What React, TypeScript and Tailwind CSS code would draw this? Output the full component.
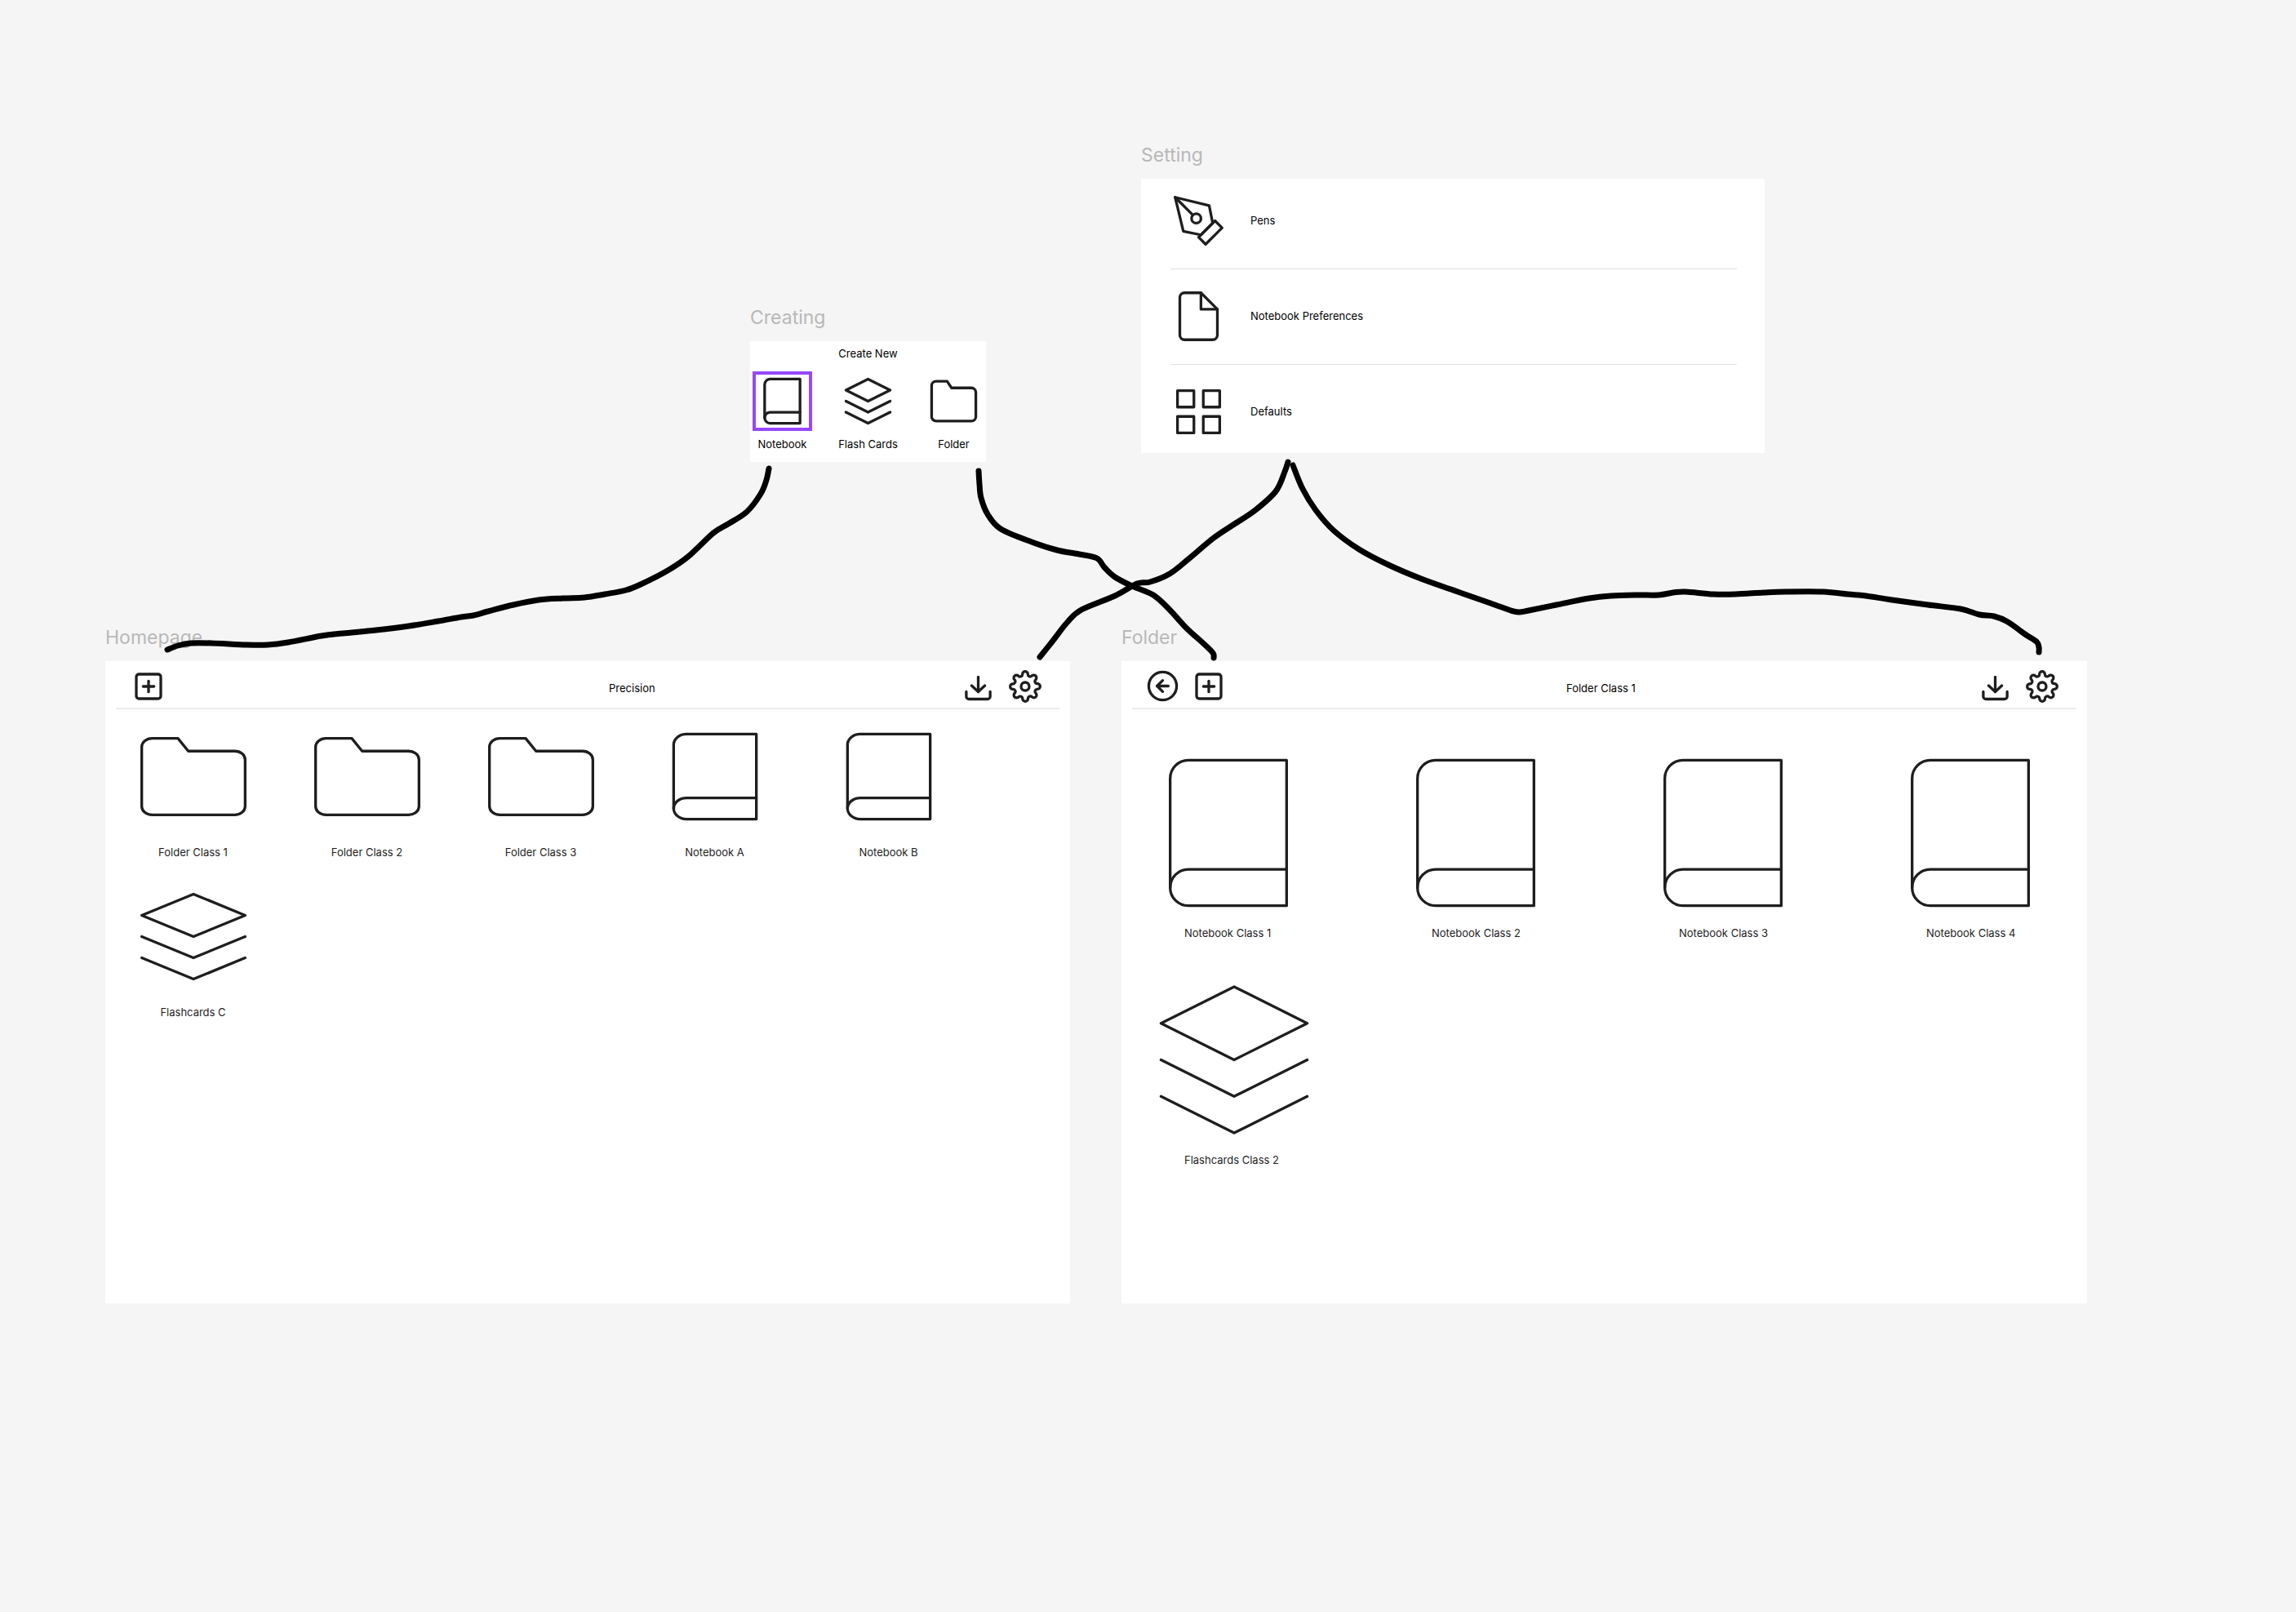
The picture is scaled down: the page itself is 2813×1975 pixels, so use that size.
import type { ReactNode } from "react";
import clsx from "clsx";

type GlyphName =
  | "book"
  | "folder"
  | "layers"
  | "pen"
  | "file"
  | "grid"
  | "plus"
  | "back"
  | "download"
  | "gear";

const glyphs: Record<GlyphName, string[]> = {
  book: [
    "M4 19.5A2.5 2.5 0 0 1 6.5 17H20",
    "M6.5 2H20v20H6.5A2.5 2.5 0 0 1 4 19.5v-15A2.5 2.5 0 0 1 6.5 2z",
  ],
  folder: [
    "M22 19a2 2 0 0 1-2 2H4a2 2 0 0 1-2-2V5a2 2 0 0 1 2-2h5l2 3h9a2 2 0 0 1 2 2z",
  ],
  layers: ["M12 2 2 7l10 5 10-5-10-5z", "M2 17l10 5 10-5", "M2 12l10 5 10-5"],
  pen: [
    "M12 19l7-7 3 3-7 7-3-3z",
    "M18 13l-1.5-7.5L2 2l3.5 14.5L13 18l5-5z",
    "M2 2l7.586 7.586",
    "M13 11a2 2 0 1 1-4 0 2 2 0 0 1 4 0z",
  ],
  file: ["M13 2H6a2 2 0 0 0-2 2v16a2 2 0 0 0 2 2h12a2 2 0 0 0 2-2V9z", "M13 2v7h7"],
  grid: ["M3 3h7v7H3z", "M14 3h7v7h-7z", "M14 14h7v7h-7z", "M3 14h7v7H3z"],
  plus: [
    "M5 3h14a2 2 0 0 1 2 2v14a2 2 0 0 1-2 2H5a2 2 0 0 1-2-2V5a2 2 0 0 1 2-2z",
    "M12 8v8",
    "M8 12h8",
  ],
  back: ["M22 12a10 10 0 1 1-20 0 10 10 0 0 1 20 0z", "M12 8l-4 4 4 4", "M16 12H8"],
  download: ["M21 15v4a2 2 0 0 1-2 2H5a2 2 0 0 1-2-2v-4", "M7 10l5 5 5-5", "M12 15V3"],
  gear: [
    "M15 12a3 3 0 1 1-6 0 3 3 0 0 1 6 0z",
    "M19.4 15a1.65 1.65 0 0 0 .33 1.82l.06.06a2 2 0 0 1 0 2.83 2 2 0 0 1-2.83 0l-.06-.06a1.65 1.65 0 0 0-1.82-.33 1.65 1.65 0 0 0-1 1.51V21a2 2 0 0 1-2 2 2 2 0 0 1-2-2v-.09A1.65 1.65 0 0 0 9 19.4a1.65 1.65 0 0 0-1.82.33l-.06.06a2 2 0 0 1-2.83 0 2 2 0 0 1 0-2.83l.06-.06a1.65 1.65 0 0 0 .33-1.82 1.65 1.65 0 0 0-1.51-1H3a2 2 0 0 1-2-2 2 2 0 0 1 2-2h.09A1.65 1.65 0 0 0 4.6 9a1.65 1.65 0 0 0-.33-1.82l-.06-.06a2 2 0 0 1 0-2.83 2 2 0 0 1 2.83 0l.06.06a1.65 1.65 0 0 0 1.82.33H9a1.65 1.65 0 0 0 1-1.51V3a2 2 0 0 1 2-2 2 2 0 0 1 2 2v.09a1.65 1.65 0 0 0 1 1.51 1.65 1.65 0 0 0 1.82-.33l.06-.06a2 2 0 0 1 2.83 0 2 2 0 0 1 0 2.83l-.06.06a1.65 1.65 0 0 0-.33 1.82V9a1.65 1.65 0 0 0 1.51 1H21a2 2 0 0 1 2 2 2 2 0 0 1-2 2h-.09a1.65 1.65 0 0 0-1.51 1z",
  ],
};

function Glyph({
  name,
  className,
  stretch = false,
}: {
  name: GlyphName;
  className: string;
  stretch?: boolean;
}) {
  return (
    <svg
      aria-hidden="true"
      viewBox="0 0 24 24"
      preserveAspectRatio={stretch ? "none" : "xMidYMid meet"}
      fill="none"
      stroke="#1e1e1e"
      strokeWidth="3.3"
      strokeLinecap="round"
      strokeLinejoin="round"
      className={clsx("block shrink-0 overflow-visible", className)}
    >
      {glyphs[name].map((d) => (
        <path key={d} d={d} vectorEffect="non-scaling-stroke" />
      ))}
    </svg>
  );
}

/* A labelled frame placed on the canvas. */
function Frame({
  title,
  place,
  className,
  children,
}: {
  title: string;
  place: string;
  className: string;
  children: ReactNode;
}) {
  return (
    <section aria-label={title} className={clsx("absolute", place)}>
      <h2 className="mb-[13px] text-[23px] leading-8 text-[#b8b8b8]">{title}</h2>
      <div className={clsx("bg-white", className)}>{children}</div>
    </section>
  );
}

function CreatingFrame() {
  const kinds: { label: string; icon: GlyphName; selected?: boolean }[] = [
    { label: "Notebook", icon: "book", selected: true },
    { label: "Flash Cards", icon: "layers" },
    { label: "Folder", icon: "folder" },
  ];
  return (
    <Frame title="Creating" place="left-[919px] top-[373px]" className="w-[289px] pt-[7px] pb-3.5">
      <h3 className="text-center leading-4">Create New</h3>
      <div className="mt-3.5 flex justify-center gap-8">
        {kinds.map((k) => (
          <button
            key={k.label}
            type="button"
            aria-pressed={!!k.selected}
            className="flex w-[73px] flex-col items-center gap-2 leading-4 whitespace-nowrap"
          >
            <span
              className={clsx(
                "flex size-[73px] items-center justify-center border-4",
                k.selected ? "border-[#9747ff]" : "border-transparent",
              )}
            >
              <Glyph name={k.icon} className="size-[65px]" />
            </span>
            {k.label}
          </button>
        ))}
      </div>
    </Frame>
  );
}

function SettingFrame() {
  const rows: { label: string; icon: GlyphName }[] = [
    { label: "Pens", icon: "pen" },
    { label: "Notebook Preferences", icon: "file" },
    { label: "Defaults", icon: "grid" },
  ];
  return (
    <Frame title="Setting" place="left-[1398px] top-[174px]" className="w-[764px] pt-[17px] pr-[34px] pb-4 pl-9">
      <ul className="divide-y divide-[#e0e0e0]">
        {rows.map((r) => (
          <li key={r.label} className="pt-[23px] pb-6 first:pt-0 last:pb-0">
            <button type="button" className="flex w-full items-center gap-[29px] text-left">
              <Glyph name={r.icon} className="size-[69px]" />
              {r.label}
            </button>
          </li>
        ))}
      </ul>
    </Frame>
  );
}

function IconButton({ label, icon, className }: { label: string; icon: GlyphName; className: string }) {
  return (
    <button type="button" aria-label={label}>
      <Glyph name={icon} stretch className={className} />
    </button>
  );
}

function TopBar({ title, columns, children }: { title: string; columns: string; children: ReactNode }) {
  return (
    <header
      className={clsx("mx-[13px] grid h-[59px] items-end border-b-2 border-[#ececec] pr-[22px] pb-1.5", columns)}
    >
      <div className="flex items-end gap-4">{children}</div>
      <h3 className="leading-9">{title}</h3>
      <div className="flex items-end gap-[18px]">
        <IconButton label="Download" icon="download" className="h-9 w-[39px]" />
        <IconButton label="Settings" icon="gear" className="size-10" />
      </div>
    </header>
  );
}

function HomepageFrame() {
  const items: { label: string; icon: GlyphName }[] = [
    { label: "Folder Class 1", icon: "folder" },
    { label: "Folder Class 2", icon: "folder" },
    { label: "Folder Class 3", icon: "folder" },
    { label: "Notebook A", icon: "book" },
    { label: "Notebook B", icon: "book" },
    { label: "Flashcards C", icon: "layers" },
  ];
  return (
    <Frame title="Homepage" place="left-[129px] top-[765px]" className="min-h-[787px] w-[1182px]">
      <TopBar title="Precision" columns="grid-cols-[584px_1fr_auto] pl-5">
        <IconButton label="Create new" icon="plus" className="size-10" />
      </TopBar>
      <div className="mt-5 flex flex-wrap gap-y-[33px] pl-px text-[#1e1e1e]">
        {items.map((item) => (
          <button
            key={item.label}
            type="button"
            className="flex w-[213px] flex-col items-center gap-[22px] leading-4"
          >
            <Glyph name={item.icon} stretch className="h-[125px] w-[152px]" />
            {item.label}
          </button>
        ))}
      </div>
    </Frame>
  );
}

function FolderFrame() {
  const items: { label: string; icon: GlyphName; size: string }[] = [
    { label: "Notebook Class 1", icon: "book", size: "w-[214px]" },
    { label: "Notebook Class 2", icon: "book", size: "w-[214px]" },
    { label: "Notebook Class 3", icon: "book", size: "w-[214px]" },
    { label: "Notebook Class 4", icon: "book", size: "w-[214px]" },
    { label: "Flashcards Class 2", icon: "layers", size: "w-[228px]" },
  ];
  return (
    <Frame title="Folder" place="left-[1374px] top-[765px]" className="min-h-[787px] w-[1183px]">
      <TopBar title="Folder Class 1" columns="grid-cols-[515px_1fr_auto] pl-[17px]">
        <IconButton label="Back" icon="back" className="size-[41px]" />
        <IconButton label="Create new" icon="plus" className="size-10" />
      </TopBar>
      <div className="mt-11 flex flex-wrap gap-x-[89px] gap-y-10 pl-6 text-[#1e1e1e]">
        {items.map((item) => (
          <button
            key={item.label}
            type="button"
            className="flex flex-col items-start gap-[7px] leading-4"
          >
            <Glyph name={item.icon} className={clsx("h-[215px]", item.size)} />
            <span className="pl-[53px]">{item.label}</span>
          </button>
        ))}
      </div>
    </Frame>
  );
}

type Point = [number, number];

/* Freehand pen strokes that link the frames. */
const strokes: Point[][] = [
  [
    [205, 796], [218, 791], [234, 788], [259, 788], [302, 790], [328, 790], [353, 787], [394, 779],
    [420, 776], [461, 772], [501, 767], [537, 761], [565, 756], [580, 754], [598, 749], [629, 741],
    [660, 735], [690, 733], [716, 732], [741, 728], [767, 723], [787, 715], [818, 699], [843, 682],
    [874, 653], [892, 642], [915, 627], [932, 605], [939, 588], [942, 574],
  ],
  [
    [1199, 577], [1200, 593], [1202, 610], [1210, 630], [1226, 648], [1264, 664], [1295, 674],
    [1322, 679], [1344, 684], [1353, 695], [1366, 707], [1387, 718], [1413, 729], [1433, 747],
    [1453, 769], [1474, 788], [1486, 800], [1487, 806],
  ],
  [
    [1274, 805], [1290, 785], [1308, 762], [1325, 747], [1366, 730], [1393, 715], [1409, 713],
    [1433, 703], [1456, 685], [1487, 659], [1514, 641], [1538, 625], [1563, 602], [1574, 578],
    [1578, 566],
  ],
  [
    [1584, 570], [1596, 599], [1612, 625], [1634, 650], [1665, 673], [1701, 692], [1741, 709],
    [1786, 725], [1826, 739], [1851, 748], [1861, 750], [1873, 748], [1907, 741], [1947, 733],
    [1974, 730], [2005, 729], [2032, 729], [2050, 726], [2065, 725], [2099, 728], [2126, 728],
    [2161, 726], [2188, 725], [2233, 725], [2264, 728], [2286, 730], [2318, 735], [2362, 741],
    [2402, 746], [2425, 753], [2443, 755], [2460, 762], [2481, 777], [2495, 786], [2498, 793],
    [2498, 799],
  ],
];

function smoothPath(p: Point[]) {
  let d = `M${p[0][0]} ${p[0][1]}`;
  for (let i = 0; i < p.length - 1; i++) {
    const a = p[i - 1] ?? p[i];
    const b = p[i];
    const c = p[i + 1];
    const e = p[i + 2] ?? c;
    d += `C${b[0] + (c[0] - a[0]) / 6} ${b[1] + (c[1] - a[1]) / 6} ${c[0] - (e[0] - b[0]) / 6} ${
      c[1] - (e[1] - b[1]) / 6
    } ${c[0]} ${c[1]}`;
  }
  return d;
}

function Connectors() {
  return (
    <svg
      aria-hidden="true"
      className="pointer-events-none absolute top-0 left-0 size-full"
      fill="none"
      stroke="#000"
      strokeWidth="7"
      strokeLinecap="round"
      strokeLinejoin="round"
    >
      {strokes.map((s) => (
        <path key={s[0].join()} d={smoothPath(s)} />
      ))}
    </svg>
  );
}

export default function App() {
  return (
    <main className="relative min-h-screen w-full overflow-hidden bg-[#f5f5f5] font-['Inter',sans-serif] text-[13px] text-black">
      <CreatingFrame />
      <SettingFrame />
      <HomepageFrame />
      <FolderFrame />
      <Connectors />
    </main>
  );
}
